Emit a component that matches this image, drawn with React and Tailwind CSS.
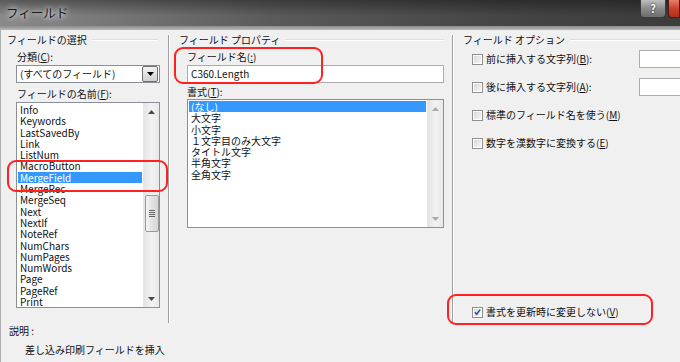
import React from 'react';

const fieldNames = [
  'Info', 'Keywords', 'LastSavedBy', 'Link', 'ListNum', 'MacroButton', 'MergeField', 'MergeRec', 'MergeSeq',
  'Next', 'NextIf', 'NoteRef', 'NumChars', 'NumPages', 'NumWords', 'Page', 'PageRef', 'Print',
];

const formats = ['(なし)', '大文字', '小文字', '１文字目のみ大文字', 'タイトル文字', '半角文字', '全角文字'];

const options = [
  { label: '前に挿入する文字列(', key: 'B', tail: '):', input: true },
  { label: '後に挿入する文字列(', key: 'A', tail: '):', input: true },
  { label: '標準のフィールド名を使う(', key: 'M', tail: ')', input: false },
  { label: '数字を漢数字に変換する(', key: 'E', tail: ')', input: false },
];

function Arrow({ up, color }) {
  return (
    <svg width="7" height="4" viewBox="0 0 7 4">
      <path d={up ? 'M0 4 L3.5 0 L7 4 Z' : 'M0 0 L7 0 L3.5 4 Z'} fill={color} />
    </svg>
  );
}

function ScrollBar({ thumbTop, disabled }) {
  const color = disabled ? '#a8a8a8' : '#4a4a4a';
  return (
    <div className="w-[16px] h-full flex flex-col bg-[linear-gradient(to_right,#e4e4e4,#f2f2f2_50%,#e8e8e8)] border-l border-[#e6e6e6]">
      <div className="h-[17px] flex items-center justify-center">
        <Arrow up color={color} />
      </div>
      <div className="flex-1">
        {thumbTop !== undefined && (
          <div
            className="mx-auto w-[14px] h-[37px] rounded-[2px] border border-[#9a9a9a] bg-[linear-gradient(to_right,#f4f4f4,#e3e3e3_50%,#d5d5d5)] flex flex-col items-center justify-center gap-[1px]"
            style={{ marginTop: thumbTop }}
          >
            <div className="w-[6px] h-px bg-[#666]" />
            <div className="w-[6px] h-px bg-[#666]" />
            <div className="w-[6px] h-px bg-[#666]" />
            <div className="w-[6px] h-px bg-[#666]" />
          </div>
        )}
      </div>
      <div className="h-[17px] flex items-center justify-center">
        <Arrow color={color} />
      </div>
    </div>
  );
}

function GroupHeader({ label, className }) {
  return (
    <div className={`flex items-center h-[12px] ${className}`}>
      <span className="whitespace-nowrap leading-[12px]">{label}</span>
      <div className="flex-1 ml-[5px] h-[2px] border-t border-[#d5dfe5] bg-white" />
    </div>
  );
}

function CheckBox({ checked }) {
  return (
    <div className="w-[11px] h-[11px] border border-[#8e8f8f] bg-white p-px">
      <div className="w-full h-full bg-[linear-gradient(135deg,#d8d8d8,#f6f6f6)] flex items-center justify-center">
        {checked && (
          <svg width="8" height="8" viewBox="0 0 8 8">
            <path d="M1 4.2 L3.1 6.6 L7 1.2" fill="none" stroke="#2b4a9c" strokeWidth="1.6" />
          </svg>
        )}
      </div>
    </div>
  );
}

function Mnemonic({ pre, k, post }) {
  return (
    <span className="whitespace-nowrap">
      {pre}
      <u className="underline-offset-[1px]">{k}</u>
      {post}
    </span>
  );
}

function RedBox({ className }) {
  return <div className={`absolute border-2 border-[#ff2020] rounded-[9px] ${className}`} />;
}

export default function App() {
  return (
    <div className="relative w-[680px] h-[362px] overflow-hidden bg-[#f0f0f0] text-[10px] text-[#111] font-['Noto_Sans_CJK_JP','Noto_Sans',sans-serif]">
      {/* タイトルバー */}
      <div className="h-[26px] flex items-center bg-[linear-gradient(to_bottom,rgba(0,0,0,0.35),rgba(0,0,0,0)_60%),linear-gradient(to_right,#8a8a8a,#5a5a5a_40%,#444_75%,#3c3c3c)]">
        <span className="ml-[6px] text-[12.5px] leading-[14px] text-[#1b1b1b] [text-shadow:0_0_5px_#fff,0_0_8px_rgba(255,255,255,0.8)]">
          フィールド
        </span>
        <div className="ml-auto self-start flex">
          <div className="w-[26px] h-[18px] mr-[2px] rounded-b-[4px] border border-t-0 border-[#3a3a3a] bg-[linear-gradient(to_bottom,#bfbfbf,#8c8c8c_50%,#6e6e6e)] flex items-center justify-center">
            <span className="text-[11px] leading-[11px] font-bold text-white [text-shadow:0_0_2px_#000]">?</span>
          </div>
          <div className="w-[12px] h-[18px] rounded-bl-[4px] border border-t-0 border-[#5a1a10] bg-[linear-gradient(to_bottom,#e6806a,#c8432b_50%,#b02e18)]" />
        </div>
      </div>
      <div className="h-[4px] bg-[linear-gradient(to_bottom,#8c8c8c,#b8b8b8)]" />

      <div className="flex">
        <div className="w-[4px] h-[332px] bg-[#8a8a8a] border-r border-[#b0b0b0]" />
        <div className="flex-1 flex flex-col">
          <div className="flex h-[293px]">
            {/* フィールドの選択 */}
            <div className="w-[167px] flex flex-col">
              <GroupHeader label="フィールドの選択" className="mt-[4px] ml-[6px] mr-[10px]" />
              <div className="mt-[5px] ml-[16px] h-[12px] leading-[12px]">
                <Mnemonic pre="分類(" k="C" post="):" />
              </div>
              <div className="mt-[2px] ml-[15px] w-[144px] h-[18px] border border-[#8a8f98] bg-white flex items-center">
                <span className="ml-[3px] flex-1 leading-[12px]">(すべてのフィールド)</span>
                <div className="w-[16px] h-[16px] mr-px border border-[#707070] rounded-[2px] bg-[linear-gradient(to_bottom,#f4f4f4,#e2e2e2_50%,#d0d0d0)] flex items-center justify-center">
                  <svg width="7" height="4" viewBox="0 0 7 4">
                    <path d="M0 0 L7 0 L3.5 4 Z" fill="#000" />
                  </svg>
                </div>
              </div>
              <div className="mt-[5px] ml-[16px] h-[12px] leading-[12px]">
                <Mnemonic pre="フィールドの名前(" k="F" post="):" />
              </div>
              <div className="mt-[2px] ml-[15px] w-[144px] h-[206px] border border-[#8a8f98] bg-white flex">
                <div className="flex-1 px-px pt-[1px]">
                  {fieldNames.map((name) => (
                    <div
                      key={name}
                      className={`h-[11.3px] leading-[11.3px] pl-[2px] whitespace-nowrap ${
                        name === 'MergeField' ? 'bg-[#3399ff] text-white' : ''
                      }`}
                    >
                      {name}
                    </div>
                  ))}
                </div>
                <ScrollBar thumbTop={75} />
              </div>
            </div>

            <div className="mt-[5px] h-[288px] w-[2px] border-l border-[#a0a0a0] bg-white" />

            {/* フィールド プロパティ */}
            <div className="w-[282px] flex flex-col">
              <GroupHeader label="フィールド プロパティ" className="mt-[4px] ml-[9px] mr-[8px]" />
              <div className="mt-[5px] ml-[17px] h-[12px] leading-[12px]">
                <Mnemonic pre="フィールド名(" k=":" post=")" />
              </div>
              <div className="mt-[2px] ml-[17px] w-[257px] h-[18px] border border-[#abadb3] bg-white flex items-center pl-[3px] leading-[12px]">
                C360.Length
              </div>
              <div className="mt-[3px] ml-[17px] h-[12px] leading-[12px]">
                <Mnemonic pre="書式(" k="T" post="):" />
              </div>
              <div className="mt-px ml-[17px] w-[257px] h-[129px] border border-[#8a8f98] bg-white flex">
                <div className="flex-1 px-px pt-px">
                  {formats.map((f) => (
                    <div
                      key={f}
                      className={`h-[11.3px] leading-[11.3px] pl-[2px] whitespace-nowrap ${
                        f === '(なし)' ? 'bg-[#3399ff] text-white' : ''
                      }`}
                    >
                      {f}
                    </div>
                  ))}
                </div>
                <ScrollBar disabled />
              </div>
            </div>

            <div className="mt-[5px] h-[288px] w-[2px] border-l border-[#a0a0a0] bg-white" />

            {/* フィールド オプション */}
            <div className="flex-1 flex flex-col">
              <GroupHeader label="フィールド オプション" className="mt-[4px] ml-[9px]" />
              <div className="mt-[4px] ml-[18px] flex flex-col gap-[10px]">
                {options.map((o) => (
                  <div key={o.key} className="h-[18px] flex items-center">
                    <div className="w-[167px] flex items-center gap-[3px]">
                      <CheckBox />
                      <span className="leading-[12px]">
                        <Mnemonic pre={o.label} k={o.key} post={o.tail} />
                      </span>
                    </div>
                    {o.input && <div className="w-[60px] h-[18px] border border-[#abadb3] bg-white" />}
                  </div>
                ))}
              </div>
              <div className="mt-auto mb-[2px] ml-[18px] h-[18px] flex items-center gap-[3px]">
                <CheckBox checked />
                <span className="leading-[12px]">
                  <Mnemonic pre="書式を更新時に変更しない(" k="V" post=")" />
                </span>
              </div>
            </div>
          </div>

          {/* 説明 */}
          <div className="mt-[2px] pl-[8px] h-[12px] leading-[12px]">説明 :</div>
          <div className="mt-[7px] pl-[24px] h-[12px] leading-[12px]">差し込み印刷フィールドを挿入</div>
        </div>
      </div>

      <RedBox className="left-[7px] top-[160px] w-[161px] h-[32px]" />
      <RedBox className="left-[174px] top-[47px] w-[149px] h-[37px]" />
      <RedBox className="left-[447px] top-[294px] w-[206px] h-[31px]" />
    </div>
  );
}
